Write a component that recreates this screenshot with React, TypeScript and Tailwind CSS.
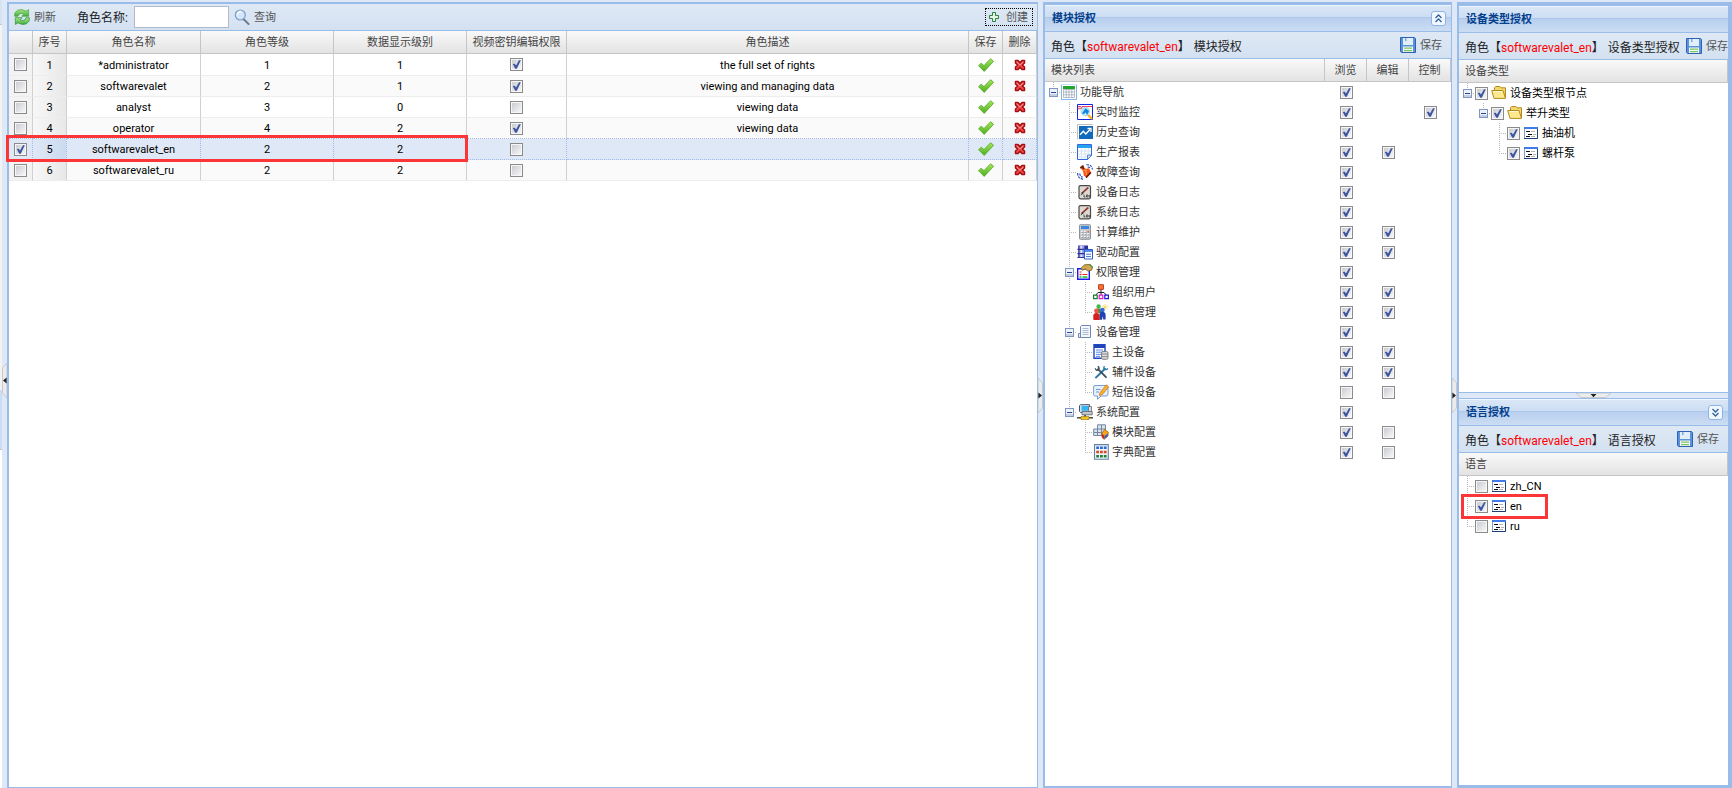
import React from "react";

type IconProps = { children: React.ReactNode; className?: string };

function Icon({ children, className = "" }: IconProps) {
  return (
    <svg viewBox="0 0 16 16" className={`size-4 shrink-0 ${className}`} aria-hidden="true">
      {children}
    </svg>
  );
}

/* ---------- toolbar and action icons ---------- */

const RefreshIcon = () => (
  <Icon>
    <defs>
      <linearGradient id="refresh-fill" x1="0" y1="0" x2="0" y2="1">
        <stop offset="0" stopColor="#a6e588" />
        <stop offset="1" stopColor="#3fae3c" />
      </linearGradient>
    </defs>
    <path d="M.7 7.3V4.2L3.5 1.2Q8-.6 12 2.2L14.6 .6V7.3H7.8L10 5.1Q7 3.6 4.8 5.4L4 7.3Z" fill="url(#refresh-fill)" stroke="#4aa53e" strokeWidth=".7" />
    <path d="M15.3 8.7V11.8L12.5 14.8Q8 16.6 4 13.8L1.4 15.4V8.7H8.2L6 10.9Q9 12.4 11.2 10.6L12 8.7Z" fill="url(#refresh-fill)" stroke="#2f8f35" strokeWidth=".7" />
  </Icon>
);

const SearchIcon = () => (
  <Icon>
    <path d="M10 10.5L14.5 15" stroke="#6f7b8b" strokeWidth="2" strokeLinecap="round" />
    <circle cx="6.3" cy="6" r="5" fill="#d3e6fb" stroke="#7d9dc9" strokeWidth="1.2" />
    <path d="M3.2 5.5Q4 2.8 7 2.7" stroke="#fff" strokeWidth="1.3" fill="none" />
  </Icon>
);

const AddIcon = () => (
  <Icon>
    <path d="M6.5 3.5H9.5V6.5H12.5V9.5H9.5V12.5H6.5V9.5H3.5V6.5H6.5Z" fill="#e3f6df" stroke="#2f7d46" />
  </Icon>
);

const SaveIcon = () => (
  <Icon>
    <path d="M.5 .5H14.5L15.5 1.5V15.5H1.5L.5 14.5Z" fill="#5b92de" stroke="#2f62b4" />
    <path d="M3 1H13V8H3Z" fill="#e3eefb" />
    <path d="M5 1H6.5V4H5Z" fill="#7fa8e0" />
    <path d="M3 9.5H13V15H3Z" fill="#f4faf0" />
    <path d="M4 11.2H12M4 13.6H12" stroke="#7cc46a" strokeWidth="1.3" />
  </Icon>
);

const TickIcon = () => (
  <Icon>
    <defs>
      <linearGradient id="tick-fill" x1="0" y1="0" x2="0" y2="1">
        <stop offset="0" stopColor="#a2e75c" />
        <stop offset="1" stopColor="#4fae1e" />
      </linearGradient>
    </defs>
    <path d="M.5 8.7L3.2 6.2L6 8.6L12.6 1.7L15.6 4.3L6.2 14.4Z" fill="url(#tick-fill)" stroke="#58a72c" strokeWidth=".8" strokeLinejoin="round" />
  </Icon>
);

const CrossIcon = () => (
  <Icon>
    <path d="M3.5 3.5H6L8 5.8L10 3.5H12.5V6L10.4 8L12.5 10V12.5H10L8 10.2L6 12.5H3.5V10L5.6 8L3.5 6Z" fill="#f04848" stroke="#a80f12" strokeWidth="1.5" strokeLinejoin="round" />
    <path d="M4.6 4.8L8 8.2L11.4 4.8" stroke="#ffa39d" fill="none" />
  </Icon>
);

/* ---------- tree icons ---------- */

const NavIcon = () => (
  <Icon>
    <path d="M.5 .5H15.5V15.5H.5Z" fill="#fff" stroke="#cfe2f5" />
    <path d="M2 2H14V5H2Z" fill="#22a52c" />
    <path d="M2.5 5.5H13.5V13.5H2.5ZM2.5 8H13.5M2.5 10.8H13.5M5.2 5V13.5M8 5V13.5M10.8 5V13.5" stroke="#8796a4" strokeWidth=".6" fill="none" />
    <path d="M.5 1V15.5H15.5V1" stroke="#7fb4ec" fill="none" />
  </Icon>
);

const MonitorIcon = () => (
  <Icon>
    <path d="M.5 .5H15.5V15.5H.5Z" fill="#fff" stroke="#1226e4" />
    <path d="M1 4.8H4L5.5 2.5H15M1 2.6H4" stroke="#f0426c" strokeWidth="1.1" fill="none" />
    <circle cx="8.3" cy="7.6" r="4.3" fill="#a8e6fa" stroke="#b5c9d8" strokeWidth=".7" />
    <path d="M5 9.5L8.5 4.2L12 7L10.3 10.8Z" fill="#0f86e0" />
    <path d="M6.5 10.5L9 8.5L9.5 11Z" fill="#e8fbff" />
    <path d="M11.2 11L15 15" stroke="#f5b521" strokeWidth="2.4" />
  </Icon>
);

const HistoryIcon = () => (
  <Icon>
    <path d="M.5 15.5V.5H15.5" fill="none" stroke="#bdbdbd" />
    <path d="M2 2H16V15H2Z" fill="#1169bb" />
    <path d="M3 10.8L6.3 7.2L8.8 10L13 5.5" stroke="#fff" strokeWidth="1.4" fill="none" />
    <path d="M10.5 4.5H14V8" stroke="#fff" strokeWidth="1.3" fill="none" />
  </Icon>
);

const ReportIcon = () => (
  <Icon>
    <path d="M.5 .5H14.5V11L10.5 15.5H.5Z" fill="#fff" stroke="#3267e0" />
    <path d="M1 1H14V4H1Z" fill="#24a5ee" />
    <path d="M1 7H14M1 10H14M1 13H10M4.5 4V15M8 4V15M11.3 4V11" stroke="#d3e1f2" strokeWidth=".9" />
    <path d="M10.5 15.5V11.2H14.5Z" fill="#dcecfb" stroke="#3267c9" strokeWidth=".8" />
  </Icon>
);

const AlarmIcon = () => (
  <Icon>
    <path d="M3 3.5L6 2L8.8 5L12 4.2L14 8.5L9.5 13.5L6.8 11.5L6 7Z" fill="#f4561b" />
    <path d="M6.5 6L9 6.5L9.5 11" stroke="#ff9d3f" strokeWidth="1.2" fill="none" />
    <path d="M3.3 4L5.8 2.2L6.6 5.2M9 13.6L13.9 8.4" stroke="#6e1c06" strokeWidth="1.6" fill="none" />
    <path d="M9.4 .8Q14.8 .4 15.4 5.5M10.6 3Q12.9 3 13.2 5" stroke="#2040b8" strokeWidth="1.1" fill="none" strokeDasharray="2.4 1" />
    <path d="M.6 9Q.8 14.7 6 15.2M2.8 9.5Q3 12.7 5.6 13.1" stroke="#2040b8" strokeWidth="1.1" fill="none" strokeDasharray="2.4 1" />
  </Icon>
);

const LogIcon = () => (
  <Icon>
    <rect x="2" y="1.6" width="11.5" height="13.2" rx="1.5" fill="#dedad3" stroke="#4a4a4a" strokeWidth="1.2" />
    <path d="M4 9L10.5 3L12 4L6.5 9Z" fill="#8a3b36" />
    <path d="M3.5 11.5L5 8.5L6.8 9Z" fill="#222" />
    <path d="M7 10.5V13H8.5M9.5 11H11V13H9.5ZM12.3 11V13.6" stroke="#333" strokeWidth=".8" fill="none" />
  </Icon>
);

const CalculatorIcon = () => (
  <Icon>
    <rect x="2.5" y=".7" width="11" height="14.6" rx=".8" fill="#c3c8cd" stroke="#8d939a" />
    <path d="M4 2H12V5H4Z" fill="#3d86dd" />
    <path d="M4 7.5H12M4 10H12M4 12.5H12" stroke="#fff" strokeWidth="1.5" strokeDasharray="1.8 1.2" />
    <path d="M4.5 8.3H12M4.5 10.8H12M4.5 13.3H12" stroke="#6b7078" strokeWidth=".7" strokeDasharray="1.8 1.2" />
    <path d="M10.3 7.5H12" stroke="#e86a3e" strokeWidth="1.5" />
  </Icon>
);

const DriverIcon = () => (
  <Icon>
    <path d="M1.2 1.5H11V13.5H1.2Z" fill="#2b2f96" />
    <path d="M2.4 1.5H7.4V13.5H2.4Z" fill="#8f9bec" />
    <path d="M3.4 1.5H5.2V13.5H3.4Z" fill="#dfe4fd" />
    <path d="M.4 5.4H11.5M.4 9.6H11.5M.4 13.5H8" stroke="#2f3390" strokeWidth="1.2" />
    <path d="M7.5 5.5H15.5V15H7.5Z" fill="#fff" stroke="#2c5cc4" />
    <path d="M8 6H15V8H8Z" fill="#4f8cf0" />
    <path d="M9 10.2H14M9 12.6H14" stroke="#4474d0" />
  </Icon>
);

const RightsIcon = () => (
  <Icon>
    <path d="M.7 4.7H12.3V15.3H.7Z" fill="#fff" stroke="#1b1bf0" strokeWidth="1.4" />
    <path d="M2.5 10.5H4.5" stroke="#e22" strokeWidth="1.4" />
    <path d="M2.5 13H4.5M5.5 13H10.5" stroke="#18b52c" strokeWidth="1.4" />
    <path d="M2.5 8H4.5M5.5 10.5H10.5" stroke="#e22" strokeWidth="1.2" />
    <path d="M4 4.2L7.5 .8L13 .5L15.7 3L14.5 6.2L11 7.2L8.5 5L5 6.2Z" fill="#cfa850" stroke="#6e5620" strokeWidth=".8" />
    <path d="M12.8 .6L15.6 3.6" stroke="#4f9a58" strokeWidth="1.4" />
  </Icon>
);

const OrgIcon = () => (
  <Icon>
    <path d="M8 5V11M2.5 11.5L5 8.5H11L13.5 11.5" stroke="#222" fill="none" />
    <path d="M5.6 .7H10.4V5.3H5.6Z" fill="#f5793b" stroke="#c23a16" />
    <path d="M.6 11.2H4.2V14.6H.6Z" fill="#fff" stroke="#16852c" strokeWidth="1.2" />
    <path d="M6.2 11.2H9.8V14.6H6.2Z" fill="#fff" stroke="#e017d8" strokeWidth="1.2" />
    <path d="M11.8 11.2H15.4V14.6H11.8Z" fill="#fff" stroke="#1b1bd8" strokeWidth="1.2" />
  </Icon>
);

const RoleIcon = () => (
  <Icon>
    <path d="M12 0V6M9 3H15.5M10 1L14.5 5.5M14.5 1L10 5" stroke="#f3d443" strokeWidth=".9" strokeDasharray="1.2 .6" />
    <circle cx="5.6" cy="2.4" r="2.2" fill="#49b84a" />
    <path d="M2.8 9V6.5Q3.4 4.2 5.6 4.2T8.4 6.5V9Z" fill="#2f9a3b" />
    <circle cx="9.4" cy="6" r="2.3" fill="#3a67d8" />
    <path d="M6.4 15.8V10.5Q6.6 7.8 9.4 7.8T12.6 10.5V15.6H10.2L9.8 12L9 15.8Z" fill="#1f42b4" />
    <circle cx="3.5" cy="7" r="2.4" fill="#f0564c" />
    <path d="M.3 15.6V11.5Q.6 9 3.5 9T6.6 11.5V16H.8Z" fill="#d5201f" />
  </Icon>
);

const DeviceGroupIcon = () => (
  <Icon>
    <path d="M3.5 2.5L4.5 1.5H13.5V13.5H3.5Z" fill="#f4f7fc" stroke="#6f87b4" />
    <path d="M1.5 9.5H3.5V13.5H1.5Z" fill="#e8eef8" stroke="#6f87b4" />
    <path d="M5.5 4.5H11.5M5.5 6.5H11.5M5.5 8.5H11.5M5.5 10.5H11.5" stroke="#a9b9d6" />
  </Icon>
);

const MainDeviceIcon = () => (
  <Icon>
    <path d="M1 .8H12V14.2H1Z" fill="#fff" stroke="#1f45c8" strokeWidth="1.4" />
    <path d="M1 1H12V4H1Z" fill="#1f45b4" />
    <path d="M3 6H10M3 8.2H10M3 10.4H8M3 12.4H7" stroke="#5b86e0" />
    <rect x="8.5" y="7.5" width="6.5" height="7.8" rx="1.5" fill="#d8d8d8" stroke="#777" strokeWidth=".9" />
    <path d="M8.5 10H15M8.5 12.6H15" stroke="#888" strokeWidth=".9" />
  </Icon>
);

const ToolsIcon = () => (
  <Icon>
    <path d="M3 13.5L12 4.8" stroke="#2f7ca8" strokeWidth="2" strokeLinecap="round" />
    <path d="M5 5.2L13 13.2" stroke="#3c4d5e" strokeWidth="1.8" strokeLinecap="round" />
    <path d="M2.2 4.4Q3 7 5.6 5.8Q6.8 4 4.8 2.2" stroke="#3c4d5e" strokeWidth="1.4" fill="none" />
    <path d="M11.4 2.2Q10 4.8 12 5.4Q13.6 6.2 14.8 4.4" stroke="#2f7ca8" strokeWidth="1.4" fill="none" />
  </Icon>
);

const SmsIcon = () => (
  <Icon>
    <path d="M2 1.5H13Q15 1.5 15 3.5V10Q15 12 13 12H8L4.5 15.3V12H2Q.6 12 .6 10.5V3Q.6 1.5 2 1.5Z" fill="#e4f0fd" stroke="#7c9fd0" />
    <path d="M3 5.5H7.5M3 8H6" stroke="#7197d0" strokeWidth="1.1" />
    <path d="M7 8.6L13.3 .8L15.7 2.8L9.4 10.6L6.4 11.6Z" fill="#f9b02e" stroke="#c8701a" strokeWidth=".7" />
  </Icon>
);

const SystemIcon = () => (
  <Icon>
    <path d="M3.5 .7H12.5V8.5H3.5L2.5 7.5V1.7Z" fill="#d5e2ee" stroke="#44566c" />
    <path d="M4.5 2H11.5V6.8H4.5Z" fill="#35b4f5" />
    <path d="M5 7.5H15.2V10.8H5Z" fill="#c4c8cd" stroke="#565c64" strokeWidth=".8" />
    <path d="M11.5 2.5H14.5V7.5H11.5Z" fill="#d9dde2" stroke="#565c64" strokeWidth=".7" />
    <path d="M8 11V13.5" stroke="#3a3a3a" strokeWidth="1.6" />
    <path d="M0 13.8H16" stroke="#3b3b3b" strokeWidth="1.4" />
    <path d="M4 12.6H12V15.6H4Z" fill="#f9c81f" stroke="#9a770d" strokeWidth=".7" />
  </Icon>
);

const ModuleIcon = () => (
  <Icon>
    <path d="M4.5 .8H12.5V11.5H.7V5H4.5Z" fill="#dbe3ee" stroke="#76869e" />
    <path d="M4.5 5H12.5M4.5 5V11.5M8.5 1V11.5M1 8.5H8.5" stroke="#76869e" />
    <path d="M9 9L11.5 5.5L15.3 8L15 12L11 15.4L9 13Z" fill="#f5a31f" stroke="#9e5b10" strokeWidth=".7" />
    <path d="M9 10L11.4 11.5L11 15.3L8.8 13.2Z" fill="#cf2b22" />
    <path d="M11.6 12L15 9.5L14.6 12.6L11.2 15.3Z" fill="#2a60c8" />
  </Icon>
);

const DictionaryIcon = () => (
  <Icon>
    <path d="M1.5 .6H15.3V15.3H1.5Z" fill="#eef3f8" stroke="#6483a2" strokeWidth="1.1" />
    <path d="M3.2 3.8H13.8" stroke="#2a6ad8" strokeWidth="2.6" strokeDasharray="2.8 1" />
    <path d="M3.2 8H13.8" stroke="#dd4a22" strokeWidth="2.6" strokeDasharray="2.8 1" />
    <path d="M3.2 12.2H13.8" stroke="#23813b" strokeWidth="2.6" strokeDasharray="2.8 1" />
  </Icon>
);

const FolderIcon = () => (
  <Icon>
    <path d="M3.5 12.5V2.5L4.5 1.5H9L10 2.8H14.5V13" fill="#f3d66e" stroke="#b58a1c" />
    <path d="M.7 5.5H12L14.5 13.4H3Z" fill="#fbe88f" stroke="#b58a1c" />
    <path d="M2.2 6.5H11.2" stroke="#fffad6" />
  </Icon>
);

const LeafIcon = () => (
  <Icon>
    <path d="M1.5 2.5H14.5V13.5H1.5Z" fill="#fff" stroke="#7f9fd0" />
    <path d="M1 2H15V4H1Z" fill="#3f7ce8" />
    <path d="M14.5 4V13.5H1" stroke="#1f3f73" fill="none" />
    <path d="M3 6.5H7M5 9.5H9M3 11.5H7" stroke="#111" />
    <path d="M8 6.5H12M10 9.5H13M8 11.5H12" stroke="#b4b4b4" />
  </Icon>
);

/* ---------- shared pieces ---------- */

function Check({ label, checked, className = "" }: { label?: string; checked?: boolean; className?: string }) {
  return (
    <span className={`relative block size-[13px] shrink-0 ${className}`}>
      <input
        type="checkbox"
        aria-label={label}
        defaultChecked={checked}
        className="peer block size-[13px] appearance-none border border-[#8b8b8b] bg-linear-to-br from-[#c6c8cf] to-[#fbfbfb] shadow-[inset_0_0_0_1px_#f6f6f6]"
      />
      <svg viewBox="0 0 13 13" className="pointer-events-none absolute inset-0 hidden size-[13px] peer-checked:block" aria-hidden="true">
        <path d="M2.8 6L4.8 5.7L6 7.6L9 2.2H10.8L6.8 10.8H5.2Z" fill="#3d559f" />
      </svg>
    </span>
  );
}

function Toolbar({ children }: { children: React.ReactNode }) {
  return (
    <div className="flex h-[27px] shrink-0 items-center overflow-hidden border-b border-[#99bce8] bg-linear-to-b from-[#dfe9f5] to-[#d3e1f1] whitespace-nowrap">
      {children}
    </div>
  );
}

function ToolButton({ icon, children, className = "" }: { icon: React.ReactNode; children: React.ReactNode; className?: string }) {
  return (
    <button type="button" className={`flex shrink-0 items-center gap-1 leading-4 text-[#555] ${className}`}>
      {icon}
      <span className="pt-0.5">{children}</span>
    </button>
  );
}

function PanelHeader({ title, tool }: { title: string; tool?: "up" | "down" }) {
  return (
    <header className="flex h-[27px] shrink-0 items-center justify-between border-b border-[#99bce8] bg-[linear-gradient(#dae7f6,#cddef3_45%,#abc7ec_46%,#abc7ec_50%,#b8cfee_51%,#cbddf3)] pr-[5px] pl-[7px] shadow-[inset_0_1px_0_#f0f6fd]">
      <h2 className="pt-0.5 leading-4 font-bold text-[#04408c]">{title}</h2>
      {tool && (
        <button type="button" aria-label={tool === "up" ? "收起" : "展开"} className="flex size-[15px] items-center justify-center rounded-[3px] border border-[#8fb4e4] bg-[#f1f7fe]">
          <svg viewBox="0 0 9 9" className="size-[9px]" fill="none" stroke="#33619c" strokeWidth="1.3" aria-hidden="true">
            {tool === "up" ? <path d="M1.5 4L4.5 1L7.5 4M1.5 8L4.5 5L7.5 8" /> : <path d="M1.5 1L4.5 4L7.5 1M1.5 5L4.5 8L7.5 5" />}
          </svg>
        </button>
      )}
    </header>
  );
}

function RoleTitle({ subject }: { subject: string }) {
  return (
    <span className="flex shrink-0 gap-1 pt-1 pl-[6px] text-[12px] leading-4 text-[#222]">
      <span>角色【<span className="text-[#ff0000]">softwarevalet_en</span>】</span>
      <span>{subject}</span>
    </span>
  );
}

function Splitter({ side, className = "" }: { side: "left" | "right"; className?: string }) {
  return (
    <div className={`flex w-[5px] shrink-0 items-center bg-[#dfe8f6] ${className}`}>
      <button type="button" aria-label="折叠面板" className="block h-[35px] w-[5px]">
        <svg viewBox="0 0 5 35" className={side === "left" ? "block h-[35px] w-[5px]" : "block h-[35px] w-[5px] rotate-180"} aria-hidden="true">
          <path d="M5 0L.5 5V30L5 35Z" fill="#ececec" stroke="#c0c0c0" strokeWidth=".8" />
          <path d="M4.6 14.5V20.5L1 17.5Z" fill="#222" />
        </svg>
      </button>
    </div>
  );
}

/** One 16px slot of the tree guide: blank, passing line, elbow or expander. */
type Guide = "blank" | "line" | "elbow" | "end" | "root" | "mid" | "last";

function GuideSlot({ kind }: { kind: Guide }) {
  const top = kind !== "blank";
  const bottom = kind === "line" || kind === "elbow" || kind === "mid";
  const across = kind !== "blank" && kind !== "line";
  const box = kind === "root" || kind === "mid" || kind === "last";
  return (
    <svg viewBox="0 0 16 20" className="h-5 w-4 shrink-0" shapeRendering="crispEdges" aria-hidden="true">
      <g stroke="#b8b8b8" strokeDasharray="1 1">
        {top && <path d="M8.5 0V10" />}
        {bottom && <path d="M8.5 10V20" />}
        {across && <path d="M8 10.5H16" />}
      </g>
      {box && (
        <>
          <path d="M4.5 6.5H12.5V14.5H4.5Z" fill="#eef2f8" stroke="#8097bd" />
          <path d="M5 12H12V14H5Z" fill="#c4d0e2" />
          <path d="M6 10.5H11" stroke="#24488c" />
        </>
      )}
    </svg>
  );
}

const headCell = "h-[23px] border-b border-[#c5c5c5] bg-linear-to-b from-[#f9f9f9] to-[#e4e3e3] p-0 pt-0.5 leading-4 font-normal text-[#444]";

/* ---------- role list ---------- */

type Role = { name: string; level: number; data: number; video: boolean; note: string; selected?: boolean };

const roles: Role[] = [
  { name: "*administrator", level: 1, data: 1, video: true, note: "the full set of rights" },
  { name: "softwarevalet", level: 2, data: 1, video: true, note: "viewing and managing data" },
  { name: "analyst", level: 3, data: 0, video: false, note: "viewing data" },
  { name: "operator", level: 4, data: 2, video: true, note: "viewing data" },
  { name: "softwarevalet_en", level: 2, data: 2, video: false, note: "", selected: true },
  { name: "softwarevalet_ru", level: 2, data: 2, video: false, note: "" },
];

function RolePanel() {
  return (
    <main className="flex min-w-0 flex-1 flex-col border-t-2 border-r border-b border-l-2 border-[#99bce8] bg-white">
      <Toolbar>
        <ToolButton icon={<RefreshIcon />} className="pl-[5px]">刷新</ToolButton>
        <label htmlFor="role-name" className="ml-[21px] pt-0.5 text-[12px] leading-4 text-[#222]">角色名称:</label>
        <input id="role-name" type="text" className="ml-[6px] h-[22px] w-[95px] border border-[#b5b8c8] bg-white px-1 outline-none" />
        <ToolButton icon={<SearchIcon />} className="ml-[5px]">查询</ToolButton>
        <ToolButton icon={<AddIcon />} className="mr-1 ml-auto h-[18px] border border-dotted border-black pr-1">创建</ToolButton>
      </Toolbar>
      <table className="w-full table-fixed border-separate border-spacing-0 text-center">
        <colgroup>
          <col className="w-[24px]" />
          <col className="w-[34px]" />
          <col className="w-[134px]" />
          <col className="w-[133px]" />
          <col className="w-[133px]" />
          <col className="w-[100px]" />
          <col />
          <col className="w-[34px]" />
          <col className="w-[34px]" />
        </colgroup>
        <thead>
          <tr>
            {["", "序号", "角色名称", "角色等级", "数据显示级别", "视频密钥编辑权限", "角色描述", "保存", "删除"].map((t, i) => (
              <th key={i} scope="col" className={`${headCell} border-r whitespace-nowrap`}>{t}</th>
            ))}
          </tr>
        </thead>
        <tbody>
          {roles.map((r, i) => {
            const height = i === 0 ? "h-[22px]" : "h-[21px]";
            const right = r.selected ? "border-r border-r-[#a3bae9] [border-right-style:dotted]" : "border-r border-r-[#d0d0d0]";
            const bottom = r.selected || roles[i + 1]?.selected ? "border-b border-b-[#a3bae9] [border-bottom-style:dotted]" : "border-b border-b-[#ededed]";
            const fill = r.selected ? "bg-[#dfe8f6]" : i % 2 ? "bg-[#fafafa]" : "bg-white";
            const gray = r.selected ? "bg-linear-to-r from-[#dfe8f6] to-[#cbdaf0]" : "bg-linear-to-r from-[#f7f7f7] to-[#e9e8e8]";
            const cell = `${height} ${right} ${bottom} p-0 leading-4`;
            const textCell = `${cell} pt-0.5`;
            return (
              <tr key={r.name} className={fill}>
                <td className={`${cell} ${r.selected ? "" : "bg-[#f3f3f3]"} relative`}>
                  <Check label={`选择 ${r.name}`} checked={r.selected} className="mx-auto" />
                  {r.selected && <span className="pointer-events-none absolute -top-1 -left-[3px] z-10 h-[27px] w-[462px] border-3 border-[#fc3636]" />}
                </td>
                <td className={`${textCell} ${gray}`}>{i + 1}</td>
                <td className={textCell}>{r.name}</td>
                <td className={textCell}>{r.level}</td>
                <td className={textCell}>{r.data}</td>
                <td className={cell}><Check label={`${r.name} 视频密钥编辑权限`} checked={r.video} className="mx-auto" /></td>
                <td className={textCell}>{r.note}</td>
                <td className={cell}><button type="button" aria-label={`保存 ${r.name}`} className="block w-full"><span className="flex justify-center"><TickIcon /></span></button></td>
                <td className={cell}><button type="button" aria-label={`删除 ${r.name}`} className="block w-full"><span className="flex justify-center"><CrossIcon /></span></button></td>
              </tr>
            );
          })}
        </tbody>
      </table>
    </main>
  );
}

/* ---------- module rights ---------- */

type Mark = boolean | null;
type ModuleRow = { guides: Guide[]; icon: React.ReactNode; name: string; marks: [Mark, Mark, Mark] };

const modules: ModuleRow[] = [
  { guides: ["root"], icon: <NavIcon />, name: "功能导航", marks: [true, null, null] },
  { guides: ["blank", "elbow"], icon: <MonitorIcon />, name: "实时监控", marks: [true, null, true] },
  { guides: ["blank", "elbow"], icon: <HistoryIcon />, name: "历史查询", marks: [true, null, null] },
  { guides: ["blank", "elbow"], icon: <ReportIcon />, name: "生产报表", marks: [true, true, null] },
  { guides: ["blank", "elbow"], icon: <AlarmIcon />, name: "故障查询", marks: [true, null, null] },
  { guides: ["blank", "elbow"], icon: <LogIcon />, name: "设备日志", marks: [true, null, null] },
  { guides: ["blank", "elbow"], icon: <LogIcon />, name: "系统日志", marks: [true, null, null] },
  { guides: ["blank", "elbow"], icon: <CalculatorIcon />, name: "计算维护", marks: [true, true, null] },
  { guides: ["blank", "elbow"], icon: <DriverIcon />, name: "驱动配置", marks: [true, true, null] },
  { guides: ["blank", "mid"], icon: <RightsIcon />, name: "权限管理", marks: [true, null, null] },
  { guides: ["blank", "line", "elbow"], icon: <OrgIcon />, name: "组织用户", marks: [true, true, null] },
  { guides: ["blank", "line", "end"], icon: <RoleIcon />, name: "角色管理", marks: [true, true, null] },
  { guides: ["blank", "mid"], icon: <DeviceGroupIcon />, name: "设备管理", marks: [true, null, null] },
  { guides: ["blank", "line", "elbow"], icon: <MainDeviceIcon />, name: "主设备", marks: [true, true, null] },
  { guides: ["blank", "line", "elbow"], icon: <ToolsIcon />, name: "辅件设备", marks: [true, true, null] },
  { guides: ["blank", "line", "end"], icon: <SmsIcon />, name: "短信设备", marks: [false, false, null] },
  { guides: ["blank", "last"], icon: <SystemIcon />, name: "系统配置", marks: [true, null, null] },
  { guides: ["blank", "blank", "elbow"], icon: <ModuleIcon />, name: "模块配置", marks: [true, false, null] },
  { guides: ["blank", "blank", "end"], icon: <DictionaryIcon />, name: "字典配置", marks: [true, false, null] },
];

const rights = ["浏览", "编辑", "控制"];

function ModulePanel() {
  return (
    <section className="flex w-[409px] shrink-0 flex-col border-t-3 border-r border-b-2 border-l-2 border-[#99bce8] bg-white">
      <PanelHeader title="模块授权" tool="up" />
      <Toolbar>
        <RoleTitle subject="模块授权" />
        <ToolButton icon={<SaveIcon />} className="ml-auto pr-[9px]">保存</ToolButton>
      </Toolbar>
      <table className="w-full table-fixed border-separate border-spacing-0">
        <colgroup>
          <col />
          <col className="w-[42px]" />
          <col className="w-[42px]" />
          <col className="w-[42px]" />
        </colgroup>
        <thead>
          <tr>
            <th scope="col" className={`${headCell} border-r text-left`}><span className="pl-[6px]">模块列表</span></th>
            {rights.map((t) => (
              <th key={t} scope="col" className={`${headCell} border-r text-center`}>{t}</th>
            ))}
          </tr>
        </thead>
        <tbody>
          {modules.map((m) => (
            <tr key={m.name}>
              <td className="h-5 p-0">
                <div className="flex h-5 items-center text-[#333]">
                  {m.guides.map((g, i) => <GuideSlot key={i} kind={g} />)}
                  {m.icon}
                  <span className="pt-0.5 pl-[3px] leading-4">{m.name}</span>
                </div>
              </td>
              {m.marks.map((v, i) => (
                <td key={i} className="h-5 p-0">
                  {v !== null && <Check label={`${m.name} ${rights[i]}`} checked={v} className="mx-auto" />}
                </td>
              ))}
            </tr>
          ))}
        </tbody>
      </table>
    </section>
  );
}

/* ---------- device type and language rights ---------- */

type Node = { guides: Guide[]; icon: React.ReactNode; name: string; checked: boolean; marked?: boolean };

const deviceTypes: Node[] = [
  { guides: ["root"], icon: <FolderIcon />, name: "设备类型根节点", checked: true },
  { guides: ["blank", "last"], icon: <FolderIcon />, name: "举升类型", checked: true },
  { guides: ["blank", "blank", "elbow"], icon: <LeafIcon />, name: "抽油机", checked: true },
  { guides: ["blank", "blank", "end"], icon: <LeafIcon />, name: "螺杆泵", checked: true },
];

const languages: Node[] = [
  { guides: ["elbow"], icon: <LeafIcon />, name: "zh_CN", checked: false },
  { guides: ["elbow"], icon: <LeafIcon />, name: "en", checked: true, marked: true },
  { guides: ["end"], icon: <LeafIcon />, name: "ru", checked: false },
];

function CheckTree({ heading, nodes }: { heading: string; nodes: Node[] }) {
  return (
    <>
      <div className="flex h-[23px] shrink-0 items-center border-r border-b border-[#c5c5c5] bg-linear-to-b from-[#f9f9f9] to-[#e4e3e3] pt-0.5 pl-[6px] leading-4 text-[#444]">
        {heading}
      </div>
      <ul>
        {nodes.map((n) => (
          <li key={n.name} className="relative">
            <label className="flex h-5 items-center text-black">
              {n.guides.map((g, i) => <GuideSlot key={i} kind={g} />)}
              <Check checked={n.checked} />
              <span className="flex items-center gap-[3px] pl-[3px] leading-4">
                {n.icon}
                <span className="pt-0.5">{n.name}</span>
              </span>
            </label>
            {n.marked && <span className="pointer-events-none absolute -top-[2px] left-[2px] z-10 h-[25px] w-[87px] border-3 border-[#fc3636]" />}
          </li>
        ))}
      </ul>
    </>
  );
}

function SidePanels() {
  return (
    <div className="flex w-[275px] shrink-0 flex-col border-t-4 border-r-4 border-b-3 border-l-2 border-[#99bce8] bg-white">
      <section className="flex h-[387px] shrink-0 flex-col border-b border-[#99bce8]">
        <PanelHeader title="设备类型授权" />
        <Toolbar>
          <RoleTitle subject="设备类型授权" />
          <ToolButton icon={<SaveIcon />} className="ml-auto">保存</ToolButton>
        </Toolbar>
        <CheckTree heading="设备类型" nodes={deviceTypes} />
      </section>
      <div className="flex h-[5px] shrink-0 justify-center bg-[#dfe8f6]">
        <button type="button" aria-label="折叠面板" className="block h-[5px] w-[35px]">
          <svg viewBox="0 0 35 5" className="block h-[5px] w-[35px]" aria-hidden="true">
            <path d="M0 0L5 4.5H30L35 0Z" fill="#ececec" stroke="#c0c0c0" strokeWidth=".8" />
            <path d="M14.5 1H20.5L17.5 4.3Z" fill="#222" />
          </svg>
        </button>
      </div>
      <section className="flex flex-1 flex-col border-t border-[#99bce8]">
        <PanelHeader title="语言授权" tool="down" />
        <Toolbar>
          <RoleTitle subject="语言授权" />
          <ToolButton icon={<SaveIcon />} className="ml-auto pr-[9px]">保存</ToolButton>
        </Toolbar>
        <CheckTree heading="语言" nodes={languages} />
      </section>
    </div>
  );
}

export default function App() {
  return (
    <div className="flex min-h-screen bg-[#dfe8f6] font-['Roboto','Noto_Sans_CJK_SC',sans-serif] text-[11px] text-black">
      <div className="flex w-[2px] shrink-0 flex-col bg-white">
        <div className="h-6 bg-[#d6e3f2]" />
        <div className="h-[366px] border-t border-[#c5c5c5] bg-[#f3f3f3]" />
        <div className="h-[60px] border-b border-[#c5c5c5] bg-[#cbddf3]" />
      </div>
      <Splitter side="left" className="pb-[28px]" />
      <div className="flex min-w-0 flex-1 pt-[2px]">
        <RolePanel />
        <Splitter side="right" />
        <ModulePanel />
        <Splitter side="right" />
        <SidePanels />
      </div>
    </div>
  );
}
